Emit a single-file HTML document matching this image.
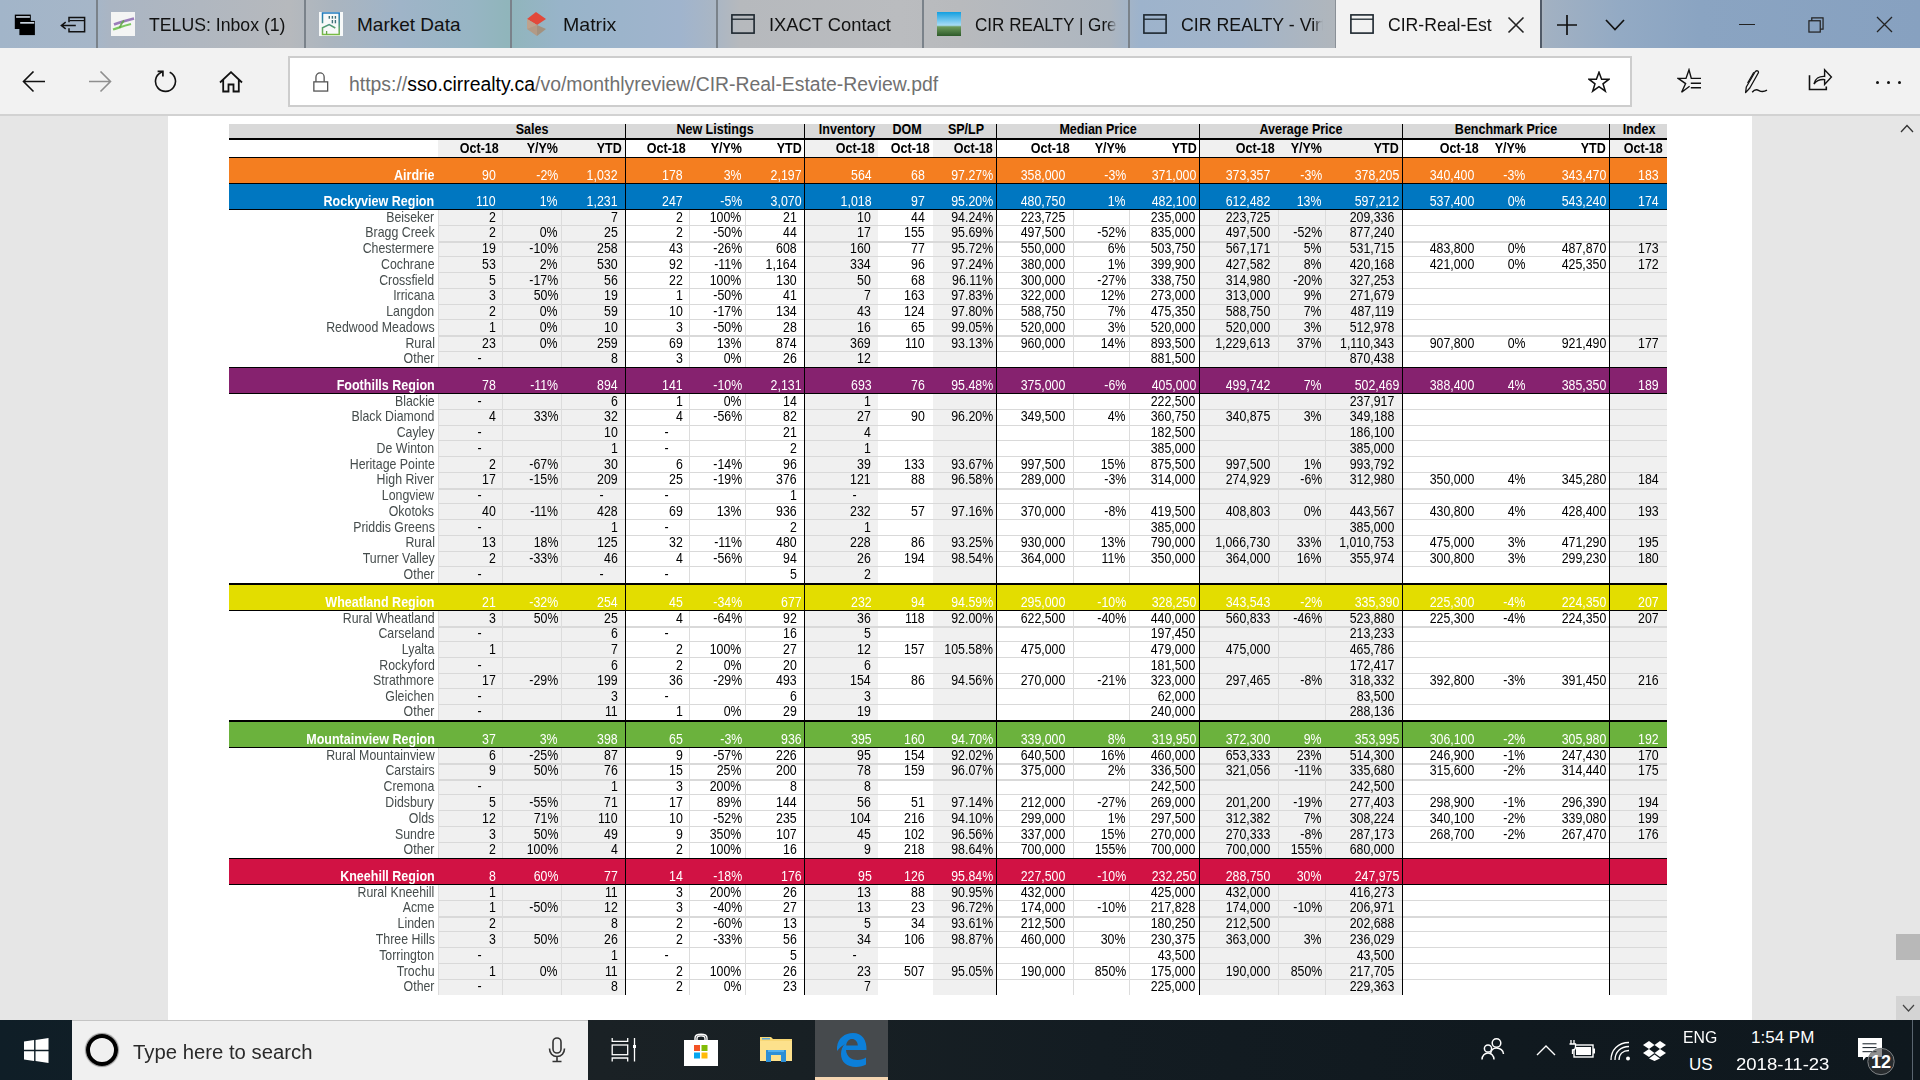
<!DOCTYPE html>
<html><head><meta charset="utf-8"><style>
#tabs{position:absolute;left:0;top:0;width:1920px;height:48px;background:linear-gradient(90deg,#a2b5c9 0px,#a6b6c8 96px,#aab5c3 110px,#b6b9bd 290px,#abb5bf 330px,#9fb4c8 400px,#97b5c4 470px,#90b5bb 508px,#98b4c9 560px,#a0b4cd 680px,#aab6c4 716px,#b6b9bd 740px,#babcbf 900px,#b8babd 960px,#adb6c0 1110px,#9db3cc 1140px,#a2b4c9 1240px,#b0b6bc 1335px,#b0b6bc 1540px,#a2b1c2 1545px,#93aac4 1620px,#8aa4c2 1700px,#87a1c0 1920px)}
.tab{position:absolute;top:0;width:206px;height:48px}
.ticon{position:absolute;left:14px;line-height:0}
.ttl{position:absolute;left:52px;top:0;height:48px;line-height:49px;font-size:19px;color:#111;white-space:nowrap;transform-origin:0 50%}
.clip{position:absolute;left:0;top:0;width:194px;height:48px;overflow:hidden}
.tclose{position:absolute;left:171px;top:16px}
#bar{position:absolute;left:0;top:48px;width:1920px;height:66px;background:#f2f2f2}
#barline{position:absolute;left:0;top:114px;width:1920px;height:2px;background:#d2d2d2}
#addr{position:absolute;left:288px;top:56px;width:1344px;height:51px;border:2px solid #cdcdcd;background:#fff}
#url{position:absolute;left:349px;top:70px;font-size:19.4px;line-height:28px;color:#000;white-space:nowrap}
#url .g{color:#707070}
#content{position:absolute;left:0;top:116px;width:1920px;height:904px;background:#e6e6e6}
#page{position:absolute;left:168px;top:116px;width:1584px;height:904px;background:#fff}
#taskbar{position:absolute;left:0;top:1020px;width:1920px;height:60px;background:linear-gradient(90deg,#0f1e27 0px,#131f26 300px,#1a2125 600px,#182024 800px,#131c22 1100px,#10191f 1500px,#0f181e 1920px)}
#search{position:absolute;left:72px;top:1020px;width:516px;height:60px;background:#f0f0f0;border-top:1px solid #c4c4c4}
#stext{position:absolute;left:133px;top:1038px;font-size:20px;transform:scaleX(1.015);transform-origin:0 0;line-height:28px;color:#2a2a2a;white-space:nowrap}
.tray{position:absolute;font-size:17px;line-height:20px;color:#fff;white-space:nowrap}

*{margin:0;padding:0;box-sizing:border-box}
html,body{width:1920px;height:1080px;overflow:hidden;background:#e6e6e6;font-family:"Liberation Sans",sans-serif}
.r{position:absolute}
.hb,.rb,.rn,.dn,.dv{position:absolute;white-space:nowrap;line-height:0;height:0}
.hb,.rb,.rn,.dn,.dv{transform:scaleX(.87);transform-origin:100% 0}
.hb{font-weight:bold;font-size:14.4px;color:#000}
.rb{font-weight:bold;font-size:14.4px;color:#fff}
.rn{font-size:14.2px;color:#fff}
.dn{font-size:14.2px;color:#454c4c}
.dv{font-size:14.2px;color:#000}
.hb.c{transform:translateX(-50%) scaleX(.87);transform-origin:50% 0}
</style></head><body>
<div id="tabs"></div>
<svg style="position:absolute;left:14px;top:14px" width="22" height="22" viewBox="0 0 22 22"><rect x="0.8" y="0.6" width="16" height="14.4" fill="#000"/><rect x="5.4" y="6.9" width="15.5" height="14.2" fill="#000"/><rect x="2.1" y="2.1" width="13.8" height="1.7" fill="#c9d3de"/><rect x="6.2" y="8" width="14" height="1.7" fill="#c9d3de"/></svg>
<svg style="position:absolute;left:60px;top:16px" width="26" height="17" viewBox="0 0 26 17"><path d="M9 6.2V1.6H24.6V15.8H9V12.2" stroke="#111" stroke-width="1.5" fill="none"/><path d="M9.6 4.6H24" stroke="#111" stroke-width="1.2"/><path d="M1.2 9.5H15.8M5.7 6.2L1.4 9.5L5.7 12.8" stroke="#111" stroke-width="1.5" fill="none"/></svg>
<div class="r" style="left:96px;top:0;width:1.6px;height:48px;background:#7a828a"></div>
<div class="r" style="left:304px;top:0;width:1.6px;height:48px;background:#7a828a"></div>
<div class="r" style="left:510px;top:0;width:1.6px;height:48px;background:#7a828a"></div>
<div class="r" style="left:716px;top:0;width:1.6px;height:48px;background:#7a828a"></div>
<div class="r" style="left:922px;top:0;width:1.6px;height:48px;background:#7a828a"></div>
<div class="r" style="left:1128px;top:0;width:1.6px;height:48px;background:#7a828a"></div>
<div class="r" style="left:1335px;top:0;width:1px;height:48px;background:#8a9097"></div>
<div class="r" style="left:1336px;top:0;width:205px;height:48px;background:#f2f2f2"></div>
<div class="r" style="left:1540px;top:0;width:2px;height:48px;background:#505a68"></div>
<div class="tab" style="left:97px"><div class="ticon" style="top:12px"><svg width="24" height="24" viewBox="0 0 24 24"><rect width="24" height="24" fill="#f4f5f4"/><path d="M3 12.5C8 10.5 14 8.8 23 6.5" stroke="#7d55a8" stroke-width="2.6" fill="none" opacity=".75"/><path d="M2 17.5C7 16 12 14 20 12" stroke="#66c046" stroke-width="2.3" fill="none" opacity=".85"/><path d="M13 8.5C11 10.5 9.5 13 8.5 16" stroke="#5fa545" stroke-width="1.8" fill="none" opacity=".85"/></svg></div><div class="ttl" style="transform:scaleX(0.930)">TELUS: Inbox (1)</div></div>
<div class="tab" style="left:305px"><div class="ticon" style="top:12px"><svg width="24" height="24" viewBox="0 0 24 24"><defs><linearGradient id="mg" x1="0" y1="0" x2="0" y2="1"><stop offset="0" stop-color="#1f7ac0"/><stop offset=".45" stop-color="#3f8a8a"/><stop offset="1" stop-color="#78bb44"/></linearGradient></defs><rect width="24" height="24" fill="#f7f9f9"/><path d="M3.5 11.3V1.1H20.2V22.6H3.5V15.8L10.2 12.6L16.3 16" stroke="url(#mg)" stroke-width="1.5" fill="none"/><path d="M7.6 22.6V19" stroke="#69a84a" stroke-width="1.3"/><g fill="#3d6f78"><rect x="9.6" y="4" width="1.4" height="2.7"/><rect x="12.7" y="4" width="1.4" height="2.7"/><rect x="15.7" y="4" width="1.4" height="2.7"/><rect x="12.7" y="8" width="1.4" height="3.3"/><rect x="15.7" y="8" width="1.4" height="3.3"/></g></svg></div><div class="ttl" style="transform:scaleX(1.000)">Market Data</div></div>
<div class="tab" style="left:511px"><div class="ticon" style="top:12px"><svg width="24" height="24" viewBox="0 0 24 24"><path d="M2 7L11 0L21 7L12 13Z" fill="#e2493a"/><path d="M2 7L12 13L12 24L2 17Z" fill="#b29a86"/><path d="M12 13L21 17L12 24Z" fill="#a3917f"/><path d="M2 7L12 13L2 17Z" fill="#c7a993" opacity=".6"/></svg></div><div class="ttl" style="transform:scaleX(1.030)">Matrix</div></div>
<div class="tab" style="left:717px"><div class="ticon" style="top:14px"><svg width="24" height="20" viewBox="0 0 24 20"><rect x="0.9" y="0.9" width="22.2" height="18.2" fill="none" stroke="#1c262e" stroke-width="1.6"/><line x1="1" y1="5.2" x2="23" y2="5.2" stroke="#1c262e" stroke-width="1.3"/></svg></div><div class="ttl" style="transform:scaleX(0.965)">IXACT Contact</div></div>
<div class="tab" style="left:923px"><div class="ticon" style="top:12px"><svg width="24" height="24" viewBox="0 0 24 24"><defs><linearGradient id="sky" x1="0" y1="0" x2="0" y2="1"><stop offset="0" stop-color="#129fe0"/><stop offset=".55" stop-color="#a8dcf5"/><stop offset=".62" stop-color="#6c9a5a"/><stop offset="1" stop-color="#2e5a2a"/></linearGradient></defs><rect width="24" height="24" fill="url(#sky)"/></svg></div><div class="clip" style="-webkit-mask-image:linear-gradient(90deg,#000 184px,transparent 194px)"><div class="ttl" style="transform:scaleX(0.900)">CIR REALTY | Great</div></div></div>
<div class="tab" style="left:1129px"><div class="ticon" style="top:14px"><svg width="24" height="20" viewBox="0 0 24 20"><rect x="0.9" y="0.9" width="22.2" height="18.2" fill="none" stroke="#1c262e" stroke-width="1.6"/><line x1="1" y1="5.2" x2="23" y2="5.2" stroke="#1c262e" stroke-width="1.3"/></svg></div><div class="clip" style="-webkit-mask-image:linear-gradient(90deg,#000 184px,transparent 194px)"><div class="ttl" style="transform:scaleX(0.934)">CIR REALTY - Virtual</div></div></div>
<div class="tab" style="left:1336px"><div class="ticon" style="top:14px"><svg width="24" height="20" viewBox="0 0 24 20"><rect x="0.9" y="0.9" width="22.2" height="18.2" fill="none" stroke="#1c262e" stroke-width="1.6"/><line x1="1" y1="5.2" x2="23" y2="5.2" stroke="#1c262e" stroke-width="1.3"/></svg></div><div class="ttl" style="transform:scaleX(0.927)">CIR-Real-Est</div><svg class="tclose" width="18" height="18" viewBox="0 0 18 18"><path d="M1.5 1.5L16.5 16.5M16.5 1.5L1.5 16.5" stroke="#222" stroke-width="1.6"/></svg></div>
<svg style="position:absolute;left:1557px;top:15px" width="20" height="20" viewBox="0 0 20 20"><path d="M10 0V20M0 10H20" stroke="#111" stroke-width="1.7"/></svg>
<svg style="position:absolute;left:1605px;top:19px" width="20" height="12" viewBox="0 0 20 12"><path d="M1 1L10 10.5L19 1" stroke="#111" stroke-width="1.7" fill="none"/></svg>
<div class="r" style="left:1739px;top:24px;width:16px;height:1.3px;background:#222"></div>
<svg style="position:absolute;left:1807.5px;top:16.5px" width="16" height="16" viewBox="0 0 17 17"><rect x="1" y="4" width="12" height="12" fill="none" stroke="#222" stroke-width="1.3"/><path d="M4 4V1H16V13H13" fill="none" stroke="#222" stroke-width="1.3"/></svg>
<svg style="position:absolute;left:1876px;top:16px" width="17" height="17" viewBox="0 0 17 17"><path d="M1 1L16 16M16 1L1 16" stroke="#222" stroke-width="1.3"/></svg>
<div id="bar"></div><div id="barline"></div>
<svg style="position:absolute;left:22px;top:71px" width="24" height="22" viewBox="0 0 24 22"><path d="M23 10.5H1.5M11.5 0.5L1.5 10.5L11.5 20.5" stroke="#111" stroke-width="1.6" fill="none"/></svg>
<svg style="position:absolute;left:88px;top:71px" width="24" height="22" viewBox="0 0 24 22"><path d="M1 10.5H22.5M12.5 0.5L22.5 10.5L12.5 20.5" stroke="#8f8f8f" stroke-width="1.6" fill="none"/></svg>
<svg style="position:absolute;left:154px;top:70px" width="23" height="23" viewBox="0 0 23 23"><path d="M15.7 2.34A10 10 0 1 1 6.8 2.57L8.6 1.5" stroke="#111" stroke-width="1.6" fill="none"/><path d="M3.6 1.3H8.9V6.4" stroke="#111" stroke-width="1.7" fill="none"/></svg>
<svg style="position:absolute;left:219px;top:71px" width="24" height="22" viewBox="0 0 24 22"><path d="M1 11.5L12 1.2L23 11.5M4.2 9V20.5H9.5V13.5H14.5V20.5H19.8V9" stroke="#111" stroke-width="1.8" fill="none"/></svg>
<div id="addr"></div>
<svg style="position:absolute;left:312px;top:72px" width="17" height="21" viewBox="0 0 17 21"><path d="M3.95 9.85V5A4.1 4.1 0 0 1 12.15 5V9.85" stroke="#555" stroke-width="1.3" fill="none"/><rect x="1.85" y="9.85" width="13.8" height="9.2" fill="none" stroke="#555" stroke-width="1.3"/></svg>
<div id="url"><span class="g">https://</span>sso.cirrealty.ca<span class="g">/vo/monthlyreview/CIR-Real-Estate-Review.pdf</span></div>
<svg style="position:absolute;left:1588px;top:71px" width="22" height="22" viewBox="0 0 22 22"><path d="M11 1.2L13.6 8.2H21L15 12.8L17.3 20.2L11 15.6L4.7 20.2L7 12.8L1 8.2H8.4Z" stroke="#111" stroke-width="1.5" fill="none" stroke-linejoin="miter"/></svg>
<svg style="position:absolute;left:1677px;top:68px" width="26" height="26" viewBox="0 0 26 26"><path d="M24 10.4H14.3L12 1.8L9 10.4H1.2L8.6 15.6L4.6 24.2L12.6 18.3" stroke="#111" stroke-width="1.4" fill="none" stroke-linejoin="miter"/><path d="M13.8 15.3H24M13.8 19.7H24" stroke="#111" stroke-width="1.5"/></svg>
<svg style="position:absolute;left:1744px;top:68px" width="26" height="26" viewBox="0 0 26 26"><path d="M1.6 24.6L2.3 19L11 4C12.2 2 15 2.6 14.4 4.8L5.8 20Z" stroke="#111" stroke-width="1.3" fill="none" stroke-linejoin="round"/><path d="M9.8 4.2L3.6 15" stroke="#111" stroke-width="1.2"/><path d="M8.2 24.2C10.3 21.6 12.5 21.2 15 22.6C17.5 24 19.8 24 23 22.2" stroke="#111" stroke-width="1.4" fill="none"/></svg>
<svg style="position:absolute;left:1808px;top:68px" width="26" height="24" viewBox="0 0 26 24"><path d="M1.5 7.3V21.5H18.3V18.6" stroke="#111" stroke-width="1.6" fill="none"/><path d="M6 16C7 10.8 11.2 8 16.6 8.4V1.8L23.4 9L16.6 16.4V11.6C12 11.2 8.3 12.8 6 16Z" stroke="#111" stroke-width="1.4" fill="none" stroke-linejoin="miter"/></svg>
<div class="r" style="left:1876.0px;top:80.5px;width:3px;height:3px;background:#111;border-radius:1.5px"></div>
<div class="r" style="left:1887.0px;top:80.5px;width:3px;height:3px;background:#111;border-radius:1.5px"></div>
<div class="r" style="left:1898.0px;top:80.5px;width:3px;height:3px;background:#111;border-radius:1.5px"></div>
<div id="content"></div><div id="page"></div>
<svg style="position:absolute;left:1900px;top:124px" width="14" height="9" viewBox="0 0 14 9"><path d="M1 8L7 1.5L13 8" stroke="#333" stroke-width="1.3" fill="none"/></svg>
<div class="r" style="left:1896px;top:934px;width:24px;height:26px;background:#b8b8b8"></div>
<div class="r" style="left:1896px;top:996px;width:24px;height:24px;background:#d4d4d4"></div>
<svg style="position:absolute;left:1902px;top:1004px" width="13" height="8" viewBox="0 0 13 8"><path d="M1 1L6.5 7L12 1" stroke="#444" stroke-width="1.2" fill="none"/></svg>
<div class="r" style="left:229.00px;top:124.00px;width:1438.00px;height:14.00px;background:#d9d9d9;"></div>
<div class="r" style="left:229.00px;top:138.00px;width:1438.00px;height:2.00px;background:#000;"></div>
<div class="r" style="left:438.00px;top:140.00px;width:187.00px;height:17.00px;background:#f0f0f0;"></div>
<div class="r" style="left:805.00px;top:140.00px;width:73.00px;height:17.00px;background:#f0f0f0;"></div>
<div class="r" style="left:933.00px;top:140.00px;width:63.50px;height:17.00px;background:#f0f0f0;"></div>
<div class="r" style="left:1200.00px;top:140.00px;width:202.30px;height:17.00px;background:#f0f0f0;"></div>
<div class="r" style="left:1610.00px;top:140.00px;width:57.00px;height:17.00px;background:#f0f0f0;"></div>
<div class="r" style="left:229.00px;top:157.00px;width:1438.00px;height:1.00px;background:#000;"></div>
<div class="r" style="left:229.00px;top:158.00px;width:1438.00px;height:25.00px;background:#f47e20;"></div>
<div class="r" style="left:229.00px;top:183.00px;width:1438.00px;height:1.00px;background:#000;"></div>
<div class="r" style="left:229.00px;top:183.00px;width:1438.00px;height:1.00px;background:#000;"></div>
<div class="r" style="left:229.00px;top:184.00px;width:1438.00px;height:25.00px;background:#0077c1;"></div>
<div class="r" style="left:229.00px;top:209.00px;width:1438.00px;height:1.00px;background:#000;"></div>
<div class="r" style="left:438.00px;top:210.00px;width:187.00px;height:157.00px;background:#f0f0f0;"></div>
<div class="r" style="left:805.00px;top:210.00px;width:73.00px;height:157.00px;background:#f0f0f0;"></div>
<div class="r" style="left:933.00px;top:210.00px;width:63.50px;height:157.00px;background:#f0f0f0;"></div>
<div class="r" style="left:1200.00px;top:210.00px;width:202.30px;height:157.00px;background:#f0f0f0;"></div>
<div class="r" style="left:1610.00px;top:210.00px;width:57.00px;height:157.00px;background:#f0f0f0;"></div>
<div class="r" style="left:438.00px;top:224.75px;width:1229.00px;height:1.00px;background:#d9d9d9;"></div>
<div class="r" style="left:438.00px;top:240.50px;width:1229.00px;height:2.00px;background:#d9d9d9;"></div>
<div class="r" style="left:438.00px;top:256.25px;width:1229.00px;height:1.00px;background:#d9d9d9;"></div>
<div class="r" style="left:438.00px;top:272.00px;width:1229.00px;height:1.00px;background:#d9d9d9;"></div>
<div class="r" style="left:438.00px;top:287.75px;width:1229.00px;height:1.00px;background:#d9d9d9;"></div>
<div class="r" style="left:438.00px;top:303.50px;width:1229.00px;height:1.00px;background:#d9d9d9;"></div>
<div class="r" style="left:438.00px;top:319.25px;width:1229.00px;height:1.00px;background:#d9d9d9;"></div>
<div class="r" style="left:438.00px;top:335.00px;width:1229.00px;height:2.00px;background:#d9d9d9;"></div>
<div class="r" style="left:438.00px;top:350.75px;width:1229.00px;height:1.00px;background:#d9d9d9;"></div>
<div class="r" style="left:437.50px;top:210.00px;width:1.00px;height:157.00px;background:#dcdcdc;"></div>
<div class="r" style="left:501.50px;top:210.00px;width:1.00px;height:157.00px;background:#dcdcdc;"></div>
<div class="r" style="left:560.50px;top:210.00px;width:1.00px;height:157.00px;background:#dcdcdc;"></div>
<div class="r" style="left:688.50px;top:210.00px;width:1.00px;height:157.00px;background:#dcdcdc;"></div>
<div class="r" style="left:745.00px;top:210.00px;width:1.00px;height:157.00px;background:#dcdcdc;"></div>
<div class="r" style="left:1072.90px;top:210.00px;width:1.00px;height:157.00px;background:#dcdcdc;"></div>
<div class="r" style="left:1129.10px;top:210.00px;width:1.00px;height:157.00px;background:#dcdcdc;"></div>
<div class="r" style="left:1277.70px;top:210.00px;width:1.00px;height:157.00px;background:#dcdcdc;"></div>
<div class="r" style="left:1324.70px;top:210.00px;width:1.00px;height:157.00px;background:#dcdcdc;"></div>
<div class="r" style="left:229.00px;top:367.00px;width:1438.00px;height:1.00px;background:#000;"></div>
<div class="r" style="left:229.00px;top:368.00px;width:1438.00px;height:25.00px;background:#86226f;"></div>
<div class="r" style="left:229.00px;top:393.00px;width:1438.00px;height:1.00px;background:#000;"></div>
<div class="r" style="left:438.00px;top:394.00px;width:187.00px;height:188.70px;background:#f0f0f0;"></div>
<div class="r" style="left:805.00px;top:394.00px;width:73.00px;height:188.70px;background:#f0f0f0;"></div>
<div class="r" style="left:933.00px;top:394.00px;width:63.50px;height:188.70px;background:#f0f0f0;"></div>
<div class="r" style="left:1200.00px;top:394.00px;width:202.30px;height:188.70px;background:#f0f0f0;"></div>
<div class="r" style="left:1610.00px;top:394.00px;width:57.00px;height:188.70px;background:#f0f0f0;"></div>
<div class="r" style="left:438.00px;top:408.77px;width:1229.00px;height:1.00px;background:#d9d9d9;"></div>
<div class="r" style="left:438.00px;top:424.53px;width:1229.00px;height:1.00px;background:#d9d9d9;"></div>
<div class="r" style="left:438.00px;top:440.30px;width:1229.00px;height:1.00px;background:#d9d9d9;"></div>
<div class="r" style="left:438.00px;top:456.07px;width:1229.00px;height:1.00px;background:#d9d9d9;"></div>
<div class="r" style="left:438.00px;top:471.83px;width:1229.00px;height:1.00px;background:#d9d9d9;"></div>
<div class="r" style="left:438.00px;top:487.60px;width:1229.00px;height:2.00px;background:#d9d9d9;"></div>
<div class="r" style="left:438.00px;top:503.37px;width:1229.00px;height:1.00px;background:#d9d9d9;"></div>
<div class="r" style="left:438.00px;top:519.13px;width:1229.00px;height:1.00px;background:#d9d9d9;"></div>
<div class="r" style="left:438.00px;top:534.90px;width:1229.00px;height:1.00px;background:#d9d9d9;"></div>
<div class="r" style="left:438.00px;top:550.67px;width:1229.00px;height:1.00px;background:#d9d9d9;"></div>
<div class="r" style="left:438.00px;top:566.43px;width:1229.00px;height:1.00px;background:#d9d9d9;"></div>
<div class="r" style="left:437.50px;top:394.00px;width:1.00px;height:188.70px;background:#dcdcdc;"></div>
<div class="r" style="left:501.50px;top:394.00px;width:1.00px;height:188.70px;background:#dcdcdc;"></div>
<div class="r" style="left:560.50px;top:394.00px;width:1.00px;height:188.70px;background:#dcdcdc;"></div>
<div class="r" style="left:688.50px;top:394.00px;width:1.00px;height:188.70px;background:#dcdcdc;"></div>
<div class="r" style="left:745.00px;top:394.00px;width:1.00px;height:188.70px;background:#dcdcdc;"></div>
<div class="r" style="left:1072.90px;top:394.00px;width:1.00px;height:188.70px;background:#dcdcdc;"></div>
<div class="r" style="left:1129.10px;top:394.00px;width:1.00px;height:188.70px;background:#dcdcdc;"></div>
<div class="r" style="left:1277.70px;top:394.00px;width:1.00px;height:188.70px;background:#dcdcdc;"></div>
<div class="r" style="left:1324.70px;top:394.00px;width:1.00px;height:188.70px;background:#dcdcdc;"></div>
<div class="r" style="left:229.00px;top:582.70px;width:1438.00px;height:2.30px;background:#000;"></div>
<div class="r" style="left:229.00px;top:585.00px;width:1438.00px;height:25.00px;background:#e3dd00;"></div>
<div class="r" style="left:229.00px;top:610.00px;width:1438.00px;height:1.00px;background:#000;"></div>
<div class="r" style="left:438.00px;top:611.00px;width:187.00px;height:109.00px;background:#f0f0f0;"></div>
<div class="r" style="left:805.00px;top:611.00px;width:73.00px;height:109.00px;background:#f0f0f0;"></div>
<div class="r" style="left:933.00px;top:611.00px;width:63.50px;height:109.00px;background:#f0f0f0;"></div>
<div class="r" style="left:1200.00px;top:611.00px;width:202.30px;height:109.00px;background:#f0f0f0;"></div>
<div class="r" style="left:1610.00px;top:611.00px;width:57.00px;height:109.00px;background:#f0f0f0;"></div>
<div class="r" style="left:438.00px;top:625.64px;width:1229.00px;height:2.00px;background:#d9d9d9;"></div>
<div class="r" style="left:438.00px;top:641.29px;width:1229.00px;height:1.00px;background:#d9d9d9;"></div>
<div class="r" style="left:438.00px;top:656.93px;width:1229.00px;height:1.00px;background:#d9d9d9;"></div>
<div class="r" style="left:438.00px;top:672.57px;width:1229.00px;height:1.00px;background:#d9d9d9;"></div>
<div class="r" style="left:438.00px;top:688.21px;width:1229.00px;height:1.00px;background:#d9d9d9;"></div>
<div class="r" style="left:438.00px;top:703.86px;width:1229.00px;height:1.00px;background:#d9d9d9;"></div>
<div class="r" style="left:437.50px;top:611.00px;width:1.00px;height:109.00px;background:#dcdcdc;"></div>
<div class="r" style="left:501.50px;top:611.00px;width:1.00px;height:109.00px;background:#dcdcdc;"></div>
<div class="r" style="left:560.50px;top:611.00px;width:1.00px;height:109.00px;background:#dcdcdc;"></div>
<div class="r" style="left:688.50px;top:611.00px;width:1.00px;height:109.00px;background:#dcdcdc;"></div>
<div class="r" style="left:745.00px;top:611.00px;width:1.00px;height:109.00px;background:#dcdcdc;"></div>
<div class="r" style="left:1072.90px;top:611.00px;width:1.00px;height:109.00px;background:#dcdcdc;"></div>
<div class="r" style="left:1129.10px;top:611.00px;width:1.00px;height:109.00px;background:#dcdcdc;"></div>
<div class="r" style="left:1277.70px;top:611.00px;width:1.00px;height:109.00px;background:#dcdcdc;"></div>
<div class="r" style="left:1324.70px;top:611.00px;width:1.00px;height:109.00px;background:#dcdcdc;"></div>
<div class="r" style="left:229.00px;top:720.00px;width:1438.00px;height:2.00px;background:#000;"></div>
<div class="r" style="left:229.00px;top:722.00px;width:1438.00px;height:25.00px;background:#6bb23d;"></div>
<div class="r" style="left:229.00px;top:747.00px;width:1438.00px;height:1.00px;background:#000;"></div>
<div class="r" style="left:438.00px;top:748.00px;width:187.00px;height:110.00px;background:#f0f0f0;"></div>
<div class="r" style="left:805.00px;top:748.00px;width:73.00px;height:110.00px;background:#f0f0f0;"></div>
<div class="r" style="left:933.00px;top:748.00px;width:63.50px;height:110.00px;background:#f0f0f0;"></div>
<div class="r" style="left:1200.00px;top:748.00px;width:202.30px;height:110.00px;background:#f0f0f0;"></div>
<div class="r" style="left:1610.00px;top:748.00px;width:57.00px;height:110.00px;background:#f0f0f0;"></div>
<div class="r" style="left:438.00px;top:762.79px;width:1229.00px;height:2.00px;background:#d9d9d9;"></div>
<div class="r" style="left:438.00px;top:778.57px;width:1229.00px;height:2.00px;background:#d9d9d9;"></div>
<div class="r" style="left:438.00px;top:794.36px;width:1229.00px;height:1.00px;background:#d9d9d9;"></div>
<div class="r" style="left:438.00px;top:810.14px;width:1229.00px;height:1.00px;background:#d9d9d9;"></div>
<div class="r" style="left:438.00px;top:825.93px;width:1229.00px;height:1.00px;background:#d9d9d9;"></div>
<div class="r" style="left:438.00px;top:841.71px;width:1229.00px;height:1.00px;background:#d9d9d9;"></div>
<div class="r" style="left:437.50px;top:748.00px;width:1.00px;height:110.00px;background:#dcdcdc;"></div>
<div class="r" style="left:501.50px;top:748.00px;width:1.00px;height:110.00px;background:#dcdcdc;"></div>
<div class="r" style="left:560.50px;top:748.00px;width:1.00px;height:110.00px;background:#dcdcdc;"></div>
<div class="r" style="left:688.50px;top:748.00px;width:1.00px;height:110.00px;background:#dcdcdc;"></div>
<div class="r" style="left:745.00px;top:748.00px;width:1.00px;height:110.00px;background:#dcdcdc;"></div>
<div class="r" style="left:1072.90px;top:748.00px;width:1.00px;height:110.00px;background:#dcdcdc;"></div>
<div class="r" style="left:1129.10px;top:748.00px;width:1.00px;height:110.00px;background:#dcdcdc;"></div>
<div class="r" style="left:1277.70px;top:748.00px;width:1.00px;height:110.00px;background:#dcdcdc;"></div>
<div class="r" style="left:1324.70px;top:748.00px;width:1.00px;height:110.00px;background:#dcdcdc;"></div>
<div class="r" style="left:229.00px;top:858.00px;width:1438.00px;height:1.00px;background:#000;"></div>
<div class="r" style="left:229.00px;top:859.00px;width:1438.00px;height:25.00px;background:#d11244;"></div>
<div class="r" style="left:229.00px;top:884.00px;width:1438.00px;height:1.00px;background:#000;"></div>
<div class="r" style="left:438.00px;top:885.00px;width:187.00px;height:110.00px;background:#f0f0f0;"></div>
<div class="r" style="left:805.00px;top:885.00px;width:73.00px;height:110.00px;background:#f0f0f0;"></div>
<div class="r" style="left:933.00px;top:885.00px;width:63.50px;height:110.00px;background:#f0f0f0;"></div>
<div class="r" style="left:1200.00px;top:885.00px;width:202.30px;height:110.00px;background:#f0f0f0;"></div>
<div class="r" style="left:1610.00px;top:885.00px;width:57.00px;height:110.00px;background:#f0f0f0;"></div>
<div class="r" style="left:438.00px;top:899.79px;width:1229.00px;height:1.00px;background:#d9d9d9;"></div>
<div class="r" style="left:438.00px;top:915.57px;width:1229.00px;height:2.00px;background:#d9d9d9;"></div>
<div class="r" style="left:438.00px;top:931.36px;width:1229.00px;height:1.00px;background:#d9d9d9;"></div>
<div class="r" style="left:438.00px;top:947.14px;width:1229.00px;height:1.00px;background:#d9d9d9;"></div>
<div class="r" style="left:438.00px;top:962.93px;width:1229.00px;height:1.00px;background:#d9d9d9;"></div>
<div class="r" style="left:438.00px;top:978.71px;width:1229.00px;height:1.00px;background:#d9d9d9;"></div>
<div class="r" style="left:437.50px;top:885.00px;width:1.00px;height:110.00px;background:#dcdcdc;"></div>
<div class="r" style="left:501.50px;top:885.00px;width:1.00px;height:110.00px;background:#dcdcdc;"></div>
<div class="r" style="left:560.50px;top:885.00px;width:1.00px;height:110.00px;background:#dcdcdc;"></div>
<div class="r" style="left:688.50px;top:885.00px;width:1.00px;height:110.00px;background:#dcdcdc;"></div>
<div class="r" style="left:745.00px;top:885.00px;width:1.00px;height:110.00px;background:#dcdcdc;"></div>
<div class="r" style="left:1072.90px;top:885.00px;width:1.00px;height:110.00px;background:#dcdcdc;"></div>
<div class="r" style="left:1129.10px;top:885.00px;width:1.00px;height:110.00px;background:#dcdcdc;"></div>
<div class="r" style="left:1277.70px;top:885.00px;width:1.00px;height:110.00px;background:#dcdcdc;"></div>
<div class="r" style="left:1324.70px;top:885.00px;width:1.00px;height:110.00px;background:#dcdcdc;"></div>
<div class="r" style="left:624.50px;top:124.00px;width:1.30px;height:871.00px;background:#000;"></div>
<div class="r" style="left:804.00px;top:124.00px;width:1.30px;height:871.00px;background:#000;"></div>
<div class="r" style="left:996.00px;top:124.00px;width:1.30px;height:871.00px;background:#000;"></div>
<div class="r" style="left:1199.00px;top:124.00px;width:1.30px;height:871.00px;background:#000;"></div>
<div class="r" style="left:1401.80px;top:124.00px;width:1.30px;height:871.00px;background:#000;"></div>
<div class="r" style="left:1609.00px;top:124.00px;width:1.30px;height:871.00px;background:#000;"></div>
<span class="hb c" style="left:532.00px;top:129.31px">Sales</span>
<span class="hb c" style="left:715.00px;top:129.31px">New Listings</span>
<span class="hb c" style="left:847.00px;top:129.31px">Inventory</span>
<span class="hb c" style="left:906.50px;top:129.31px">DOM</span>
<span class="hb c" style="left:965.50px;top:129.31px">SP/LP</span>
<span class="hb c" style="left:1098.00px;top:129.31px">Median Price</span>
<span class="hb c" style="left:1301.00px;top:129.31px">Average Price</span>
<span class="hb c" style="left:1506.00px;top:129.31px">Benchmark Price</span>
<span class="hb c" style="left:1639.00px;top:129.31px">Index</span>
<span class="hb" style="right:1421.00px;top:147.81px">Oct-18</span>
<span class="hb" style="right:1362.50px;top:147.81px">Y/Y%</span>
<span class="hb" style="right:1298.00px;top:147.81px">YTD</span>
<span class="hb" style="right:1234.00px;top:147.81px">Oct-18</span>
<span class="hb" style="right:1178.30px;top:147.81px">Y/Y%</span>
<span class="hb" style="right:1118.40px;top:147.81px">YTD</span>
<span class="hb" style="right:1045.00px;top:147.81px">Oct-18</span>
<span class="hb" style="right:990.50px;top:147.81px">Oct-18</span>
<span class="hb" style="right:927.00px;top:147.81px">Oct-18</span>
<span class="hb" style="right:850.00px;top:147.81px">Oct-18</span>
<span class="hb" style="right:794.20px;top:147.81px">Y/Y%</span>
<span class="hb" style="right:723.70px;top:147.81px">YTD</span>
<span class="hb" style="right:645.20px;top:147.81px">Oct-18</span>
<span class="hb" style="right:598.20px;top:147.81px">Y/Y%</span>
<span class="hb" style="right:521.00px;top:147.81px">YTD</span>
<span class="hb" style="right:440.80px;top:147.81px">Oct-18</span>
<span class="hb" style="right:394.40px;top:147.81px">Y/Y%</span>
<span class="hb" style="right:314.20px;top:147.81px">YTD</span>
<span class="hb" style="right:257.00px;top:147.81px">Oct-18</span>
<span class="rb" style="right:1485.60px;top:175.21px">Airdrie</span>
<span class="rn" style="right:1424.50px;top:175.28px">90</span>
<span class="rn" style="right:1362.00px;top:175.28px">-2%</span>
<span class="rn" style="right:1302.00px;top:175.28px">1,032</span>
<span class="rn" style="right:1237.00px;top:175.28px">178</span>
<span class="rn" style="right:1178.00px;top:175.28px">3%</span>
<span class="rn" style="right:1118.40px;top:175.28px">2,197</span>
<span class="rn" style="right:1048.40px;top:175.28px">564</span>
<span class="rn" style="right:995.00px;top:175.28px">68</span>
<span class="rn" style="right:927.00px;top:175.28px">97.27%</span>
<span class="rn" style="right:854.40px;top:175.28px">358,000</span>
<span class="rn" style="right:794.20px;top:175.28px">-3%</span>
<span class="rn" style="right:723.70px;top:175.28px">371,000</span>
<span class="rn" style="right:649.80px;top:175.28px">373,357</span>
<span class="rn" style="right:598.20px;top:175.28px">-3%</span>
<span class="rn" style="right:521.00px;top:175.28px">378,205</span>
<span class="rn" style="right:446.00px;top:175.28px">340,400</span>
<span class="rn" style="right:394.40px;top:175.28px">-3%</span>
<span class="rn" style="right:314.20px;top:175.28px">343,470</span>
<span class="rn" style="right:261.00px;top:175.28px">183</span>
<span class="rb" style="right:1485.60px;top:201.21px">Rockyview Region</span>
<span class="rn" style="right:1424.50px;top:201.28px">110</span>
<span class="rn" style="right:1362.00px;top:201.28px">1%</span>
<span class="rn" style="right:1302.00px;top:201.28px">1,231</span>
<span class="rn" style="right:1237.00px;top:201.28px">247</span>
<span class="rn" style="right:1178.00px;top:201.28px">-5%</span>
<span class="rn" style="right:1118.40px;top:201.28px">3,070</span>
<span class="rn" style="right:1048.40px;top:201.28px">1,018</span>
<span class="rn" style="right:995.00px;top:201.28px">97</span>
<span class="rn" style="right:927.00px;top:201.28px">95.20%</span>
<span class="rn" style="right:854.40px;top:201.28px">480,750</span>
<span class="rn" style="right:794.20px;top:201.28px">1%</span>
<span class="rn" style="right:723.70px;top:201.28px">482,100</span>
<span class="rn" style="right:649.80px;top:201.28px">612,482</span>
<span class="rn" style="right:598.20px;top:201.28px">13%</span>
<span class="rn" style="right:521.00px;top:201.28px">597,212</span>
<span class="rn" style="right:446.00px;top:201.28px">537,400</span>
<span class="rn" style="right:394.40px;top:201.28px">0%</span>
<span class="rn" style="right:314.20px;top:201.28px">543,240</span>
<span class="rn" style="right:261.00px;top:201.28px">174</span>
<span class="dn" style="right:1485.60px;top:216.58px">Beiseker</span>
<span class="dv" style="right:1424.50px;top:216.58px">2</span>
<span class="dv" style="right:1302.50px;top:216.58px">7</span>
<span class="dv" style="right:1237.50px;top:216.58px">2</span>
<span class="dv" style="right:1178.30px;top:216.58px">100%</span>
<span class="dv" style="right:1123.50px;top:216.58px">21</span>
<span class="dv" style="right:1049.50px;top:216.58px">10</span>
<span class="dv" style="right:995.30px;top:216.58px">44</span>
<span class="dv" style="right:927.00px;top:216.58px">94.24%</span>
<span class="dv" style="right:854.40px;top:216.58px">223,725</span>
<span class="dv" style="right:724.30px;top:216.58px">235,000</span>
<span class="dv" style="right:649.80px;top:216.58px">223,725</span>
<span class="dv" style="right:526.00px;top:216.58px">209,336</span>
<span class="dn" style="right:1485.60px;top:232.33px">Bragg Creek</span>
<span class="dv" style="right:1424.50px;top:232.33px">2</span>
<span class="dv" style="right:1362.00px;top:232.33px">0%</span>
<span class="dv" style="right:1302.50px;top:232.33px">25</span>
<span class="dv" style="right:1237.50px;top:232.33px">2</span>
<span class="dv" style="right:1178.30px;top:232.33px">-50%</span>
<span class="dv" style="right:1123.50px;top:232.33px">44</span>
<span class="dv" style="right:1049.50px;top:232.33px">17</span>
<span class="dv" style="right:995.30px;top:232.33px">155</span>
<span class="dv" style="right:927.00px;top:232.33px">95.69%</span>
<span class="dv" style="right:854.40px;top:232.33px">497,500</span>
<span class="dv" style="right:794.20px;top:232.33px">-52%</span>
<span class="dv" style="right:724.30px;top:232.33px">835,000</span>
<span class="dv" style="right:649.80px;top:232.33px">497,500</span>
<span class="dv" style="right:598.20px;top:232.33px">-52%</span>
<span class="dv" style="right:526.00px;top:232.33px">877,240</span>
<span class="dn" style="right:1485.60px;top:248.08px">Chestermere</span>
<span class="dv" style="right:1424.50px;top:248.08px">19</span>
<span class="dv" style="right:1362.00px;top:248.08px">-10%</span>
<span class="dv" style="right:1302.50px;top:248.08px">258</span>
<span class="dv" style="right:1237.50px;top:248.08px">43</span>
<span class="dv" style="right:1178.30px;top:248.08px">-26%</span>
<span class="dv" style="right:1123.50px;top:248.08px">608</span>
<span class="dv" style="right:1049.50px;top:248.08px">160</span>
<span class="dv" style="right:995.30px;top:248.08px">77</span>
<span class="dv" style="right:927.00px;top:248.08px">95.72%</span>
<span class="dv" style="right:854.40px;top:248.08px">550,000</span>
<span class="dv" style="right:794.20px;top:248.08px">6%</span>
<span class="dv" style="right:724.30px;top:248.08px">503,750</span>
<span class="dv" style="right:649.80px;top:248.08px">567,171</span>
<span class="dv" style="right:598.20px;top:248.08px">5%</span>
<span class="dv" style="right:526.00px;top:248.08px">531,715</span>
<span class="dv" style="right:446.00px;top:248.08px">483,800</span>
<span class="dv" style="right:394.40px;top:248.08px">0%</span>
<span class="dv" style="right:314.20px;top:248.08px">487,870</span>
<span class="dv" style="right:261.00px;top:248.08px">173</span>
<span class="dn" style="right:1485.60px;top:263.83px">Cochrane</span>
<span class="dv" style="right:1424.50px;top:263.83px">53</span>
<span class="dv" style="right:1362.00px;top:263.83px">2%</span>
<span class="dv" style="right:1302.50px;top:263.83px">530</span>
<span class="dv" style="right:1237.50px;top:263.83px">92</span>
<span class="dv" style="right:1178.30px;top:263.83px">-11%</span>
<span class="dv" style="right:1123.50px;top:263.83px">1,164</span>
<span class="dv" style="right:1049.50px;top:263.83px">334</span>
<span class="dv" style="right:995.30px;top:263.83px">96</span>
<span class="dv" style="right:927.00px;top:263.83px">97.24%</span>
<span class="dv" style="right:854.40px;top:263.83px">380,000</span>
<span class="dv" style="right:794.20px;top:263.83px">1%</span>
<span class="dv" style="right:724.30px;top:263.83px">399,900</span>
<span class="dv" style="right:649.80px;top:263.83px">427,582</span>
<span class="dv" style="right:598.20px;top:263.83px">8%</span>
<span class="dv" style="right:526.00px;top:263.83px">420,168</span>
<span class="dv" style="right:446.00px;top:263.83px">421,000</span>
<span class="dv" style="right:394.40px;top:263.83px">0%</span>
<span class="dv" style="right:314.20px;top:263.83px">425,350</span>
<span class="dv" style="right:261.00px;top:263.83px">172</span>
<span class="dn" style="right:1485.60px;top:279.58px">Crossfield</span>
<span class="dv" style="right:1424.50px;top:279.58px">5</span>
<span class="dv" style="right:1362.00px;top:279.58px">-17%</span>
<span class="dv" style="right:1302.50px;top:279.58px">56</span>
<span class="dv" style="right:1237.50px;top:279.58px">22</span>
<span class="dv" style="right:1178.30px;top:279.58px">100%</span>
<span class="dv" style="right:1123.50px;top:279.58px">130</span>
<span class="dv" style="right:1049.50px;top:279.58px">50</span>
<span class="dv" style="right:995.30px;top:279.58px">68</span>
<span class="dv" style="right:927.00px;top:279.58px">96.11%</span>
<span class="dv" style="right:854.40px;top:279.58px">300,000</span>
<span class="dv" style="right:794.20px;top:279.58px">-27%</span>
<span class="dv" style="right:724.30px;top:279.58px">338,750</span>
<span class="dv" style="right:649.80px;top:279.58px">314,980</span>
<span class="dv" style="right:598.20px;top:279.58px">-20%</span>
<span class="dv" style="right:526.00px;top:279.58px">327,253</span>
<span class="dn" style="right:1485.60px;top:295.33px">Irricana</span>
<span class="dv" style="right:1424.50px;top:295.33px">3</span>
<span class="dv" style="right:1362.00px;top:295.33px">50%</span>
<span class="dv" style="right:1302.50px;top:295.33px">19</span>
<span class="dv" style="right:1237.50px;top:295.33px">1</span>
<span class="dv" style="right:1178.30px;top:295.33px">-50%</span>
<span class="dv" style="right:1123.50px;top:295.33px">41</span>
<span class="dv" style="right:1049.50px;top:295.33px">7</span>
<span class="dv" style="right:995.30px;top:295.33px">163</span>
<span class="dv" style="right:927.00px;top:295.33px">97.83%</span>
<span class="dv" style="right:854.40px;top:295.33px">322,000</span>
<span class="dv" style="right:794.20px;top:295.33px">12%</span>
<span class="dv" style="right:724.30px;top:295.33px">273,000</span>
<span class="dv" style="right:649.80px;top:295.33px">313,000</span>
<span class="dv" style="right:598.20px;top:295.33px">9%</span>
<span class="dv" style="right:526.00px;top:295.33px">271,679</span>
<span class="dn" style="right:1485.60px;top:311.08px">Langdon</span>
<span class="dv" style="right:1424.50px;top:311.08px">2</span>
<span class="dv" style="right:1362.00px;top:311.08px">0%</span>
<span class="dv" style="right:1302.50px;top:311.08px">59</span>
<span class="dv" style="right:1237.50px;top:311.08px">10</span>
<span class="dv" style="right:1178.30px;top:311.08px">-17%</span>
<span class="dv" style="right:1123.50px;top:311.08px">134</span>
<span class="dv" style="right:1049.50px;top:311.08px">43</span>
<span class="dv" style="right:995.30px;top:311.08px">124</span>
<span class="dv" style="right:927.00px;top:311.08px">97.80%</span>
<span class="dv" style="right:854.40px;top:311.08px">588,750</span>
<span class="dv" style="right:794.20px;top:311.08px">7%</span>
<span class="dv" style="right:724.30px;top:311.08px">475,350</span>
<span class="dv" style="right:649.80px;top:311.08px">588,750</span>
<span class="dv" style="right:598.20px;top:311.08px">7%</span>
<span class="dv" style="right:526.00px;top:311.08px">487,119</span>
<span class="dn" style="right:1485.60px;top:326.83px">Redwood Meadows</span>
<span class="dv" style="right:1424.50px;top:326.83px">1</span>
<span class="dv" style="right:1362.00px;top:326.83px">0%</span>
<span class="dv" style="right:1302.50px;top:326.83px">10</span>
<span class="dv" style="right:1237.50px;top:326.83px">3</span>
<span class="dv" style="right:1178.30px;top:326.83px">-50%</span>
<span class="dv" style="right:1123.50px;top:326.83px">28</span>
<span class="dv" style="right:1049.50px;top:326.83px">16</span>
<span class="dv" style="right:995.30px;top:326.83px">65</span>
<span class="dv" style="right:927.00px;top:326.83px">99.05%</span>
<span class="dv" style="right:854.40px;top:326.83px">520,000</span>
<span class="dv" style="right:794.20px;top:326.83px">3%</span>
<span class="dv" style="right:724.30px;top:326.83px">520,000</span>
<span class="dv" style="right:649.80px;top:326.83px">520,000</span>
<span class="dv" style="right:598.20px;top:326.83px">3%</span>
<span class="dv" style="right:526.00px;top:326.83px">512,978</span>
<span class="dn" style="right:1485.60px;top:342.58px">Rural</span>
<span class="dv" style="right:1424.50px;top:342.58px">23</span>
<span class="dv" style="right:1362.00px;top:342.58px">0%</span>
<span class="dv" style="right:1302.50px;top:342.58px">259</span>
<span class="dv" style="right:1237.50px;top:342.58px">69</span>
<span class="dv" style="right:1178.30px;top:342.58px">13%</span>
<span class="dv" style="right:1123.50px;top:342.58px">874</span>
<span class="dv" style="right:1049.50px;top:342.58px">369</span>
<span class="dv" style="right:995.30px;top:342.58px">110</span>
<span class="dv" style="right:927.00px;top:342.58px">93.13%</span>
<span class="dv" style="right:854.40px;top:342.58px">960,000</span>
<span class="dv" style="right:794.20px;top:342.58px">14%</span>
<span class="dv" style="right:724.30px;top:342.58px">893,500</span>
<span class="dv" style="right:649.80px;top:342.58px">1,229,613</span>
<span class="dv" style="right:598.20px;top:342.58px">37%</span>
<span class="dv" style="right:526.00px;top:342.58px">1,110,343</span>
<span class="dv" style="right:446.00px;top:342.58px">907,800</span>
<span class="dv" style="right:394.40px;top:342.58px">0%</span>
<span class="dv" style="right:314.20px;top:342.58px">921,490</span>
<span class="dv" style="right:261.00px;top:342.58px">177</span>
<span class="dn" style="right:1485.60px;top:358.33px">Other</span>
<span class="dv" style="right:1438.50px;top:358.33px">-</span>
<span class="dv" style="right:1302.50px;top:358.33px">8</span>
<span class="dv" style="right:1237.50px;top:358.33px">3</span>
<span class="dv" style="right:1178.30px;top:358.33px">0%</span>
<span class="dv" style="right:1123.50px;top:358.33px">26</span>
<span class="dv" style="right:1049.50px;top:358.33px">12</span>
<span class="dv" style="right:724.30px;top:358.33px">881,500</span>
<span class="dv" style="right:526.00px;top:358.33px">870,438</span>
<span class="rb" style="right:1485.60px;top:385.21px">Foothills Region</span>
<span class="rn" style="right:1424.50px;top:385.28px">78</span>
<span class="rn" style="right:1362.00px;top:385.28px">-11%</span>
<span class="rn" style="right:1302.00px;top:385.28px">894</span>
<span class="rn" style="right:1237.00px;top:385.28px">141</span>
<span class="rn" style="right:1178.00px;top:385.28px">-10%</span>
<span class="rn" style="right:1118.40px;top:385.28px">2,131</span>
<span class="rn" style="right:1048.40px;top:385.28px">693</span>
<span class="rn" style="right:995.00px;top:385.28px">76</span>
<span class="rn" style="right:927.00px;top:385.28px">95.48%</span>
<span class="rn" style="right:854.40px;top:385.28px">375,000</span>
<span class="rn" style="right:794.20px;top:385.28px">-6%</span>
<span class="rn" style="right:723.70px;top:385.28px">405,000</span>
<span class="rn" style="right:649.80px;top:385.28px">499,742</span>
<span class="rn" style="right:598.20px;top:385.28px">7%</span>
<span class="rn" style="right:521.00px;top:385.28px">502,469</span>
<span class="rn" style="right:446.00px;top:385.28px">388,400</span>
<span class="rn" style="right:394.40px;top:385.28px">4%</span>
<span class="rn" style="right:314.20px;top:385.28px">385,350</span>
<span class="rn" style="right:261.00px;top:385.28px">189</span>
<span class="dn" style="right:1485.60px;top:400.58px">Blackie</span>
<span class="dv" style="right:1438.50px;top:400.58px">-</span>
<span class="dv" style="right:1302.50px;top:400.58px">6</span>
<span class="dv" style="right:1237.50px;top:400.58px">1</span>
<span class="dv" style="right:1178.30px;top:400.58px">0%</span>
<span class="dv" style="right:1123.50px;top:400.58px">14</span>
<span class="dv" style="right:1049.50px;top:400.58px">1</span>
<span class="dv" style="right:724.30px;top:400.58px">222,500</span>
<span class="dv" style="right:526.00px;top:400.58px">237,917</span>
<span class="dn" style="right:1485.60px;top:416.35px">Black Diamond</span>
<span class="dv" style="right:1424.50px;top:416.35px">4</span>
<span class="dv" style="right:1362.00px;top:416.35px">33%</span>
<span class="dv" style="right:1302.50px;top:416.35px">32</span>
<span class="dv" style="right:1237.50px;top:416.35px">4</span>
<span class="dv" style="right:1178.30px;top:416.35px">-56%</span>
<span class="dv" style="right:1123.50px;top:416.35px">82</span>
<span class="dv" style="right:1049.50px;top:416.35px">27</span>
<span class="dv" style="right:995.30px;top:416.35px">90</span>
<span class="dv" style="right:927.00px;top:416.35px">96.20%</span>
<span class="dv" style="right:854.40px;top:416.35px">349,500</span>
<span class="dv" style="right:794.20px;top:416.35px">4%</span>
<span class="dv" style="right:724.30px;top:416.35px">360,750</span>
<span class="dv" style="right:649.80px;top:416.35px">340,875</span>
<span class="dv" style="right:598.20px;top:416.35px">3%</span>
<span class="dv" style="right:526.00px;top:416.35px">349,188</span>
<span class="dn" style="right:1485.60px;top:432.11px">Cayley</span>
<span class="dv" style="right:1438.50px;top:432.11px">-</span>
<span class="dv" style="right:1302.50px;top:432.11px">10</span>
<span class="dv" style="right:1251.50px;top:432.11px">-</span>
<span class="dv" style="right:1123.50px;top:432.11px">21</span>
<span class="dv" style="right:1049.50px;top:432.11px">4</span>
<span class="dv" style="right:724.30px;top:432.11px">182,500</span>
<span class="dv" style="right:526.00px;top:432.11px">186,100</span>
<span class="dn" style="right:1485.60px;top:447.88px">De Winton</span>
<span class="dv" style="right:1438.50px;top:447.88px">-</span>
<span class="dv" style="right:1302.50px;top:447.88px">1</span>
<span class="dv" style="right:1251.50px;top:447.88px">-</span>
<span class="dv" style="right:1123.50px;top:447.88px">2</span>
<span class="dv" style="right:1049.50px;top:447.88px">1</span>
<span class="dv" style="right:724.30px;top:447.88px">385,000</span>
<span class="dv" style="right:526.00px;top:447.88px">385,000</span>
<span class="dn" style="right:1485.60px;top:463.65px">Heritage Pointe</span>
<span class="dv" style="right:1424.50px;top:463.65px">2</span>
<span class="dv" style="right:1362.00px;top:463.65px">-67%</span>
<span class="dv" style="right:1302.50px;top:463.65px">30</span>
<span class="dv" style="right:1237.50px;top:463.65px">6</span>
<span class="dv" style="right:1178.30px;top:463.65px">-14%</span>
<span class="dv" style="right:1123.50px;top:463.65px">96</span>
<span class="dv" style="right:1049.50px;top:463.65px">39</span>
<span class="dv" style="right:995.30px;top:463.65px">133</span>
<span class="dv" style="right:927.00px;top:463.65px">93.67%</span>
<span class="dv" style="right:854.40px;top:463.65px">997,500</span>
<span class="dv" style="right:794.20px;top:463.65px">15%</span>
<span class="dv" style="right:724.30px;top:463.65px">875,500</span>
<span class="dv" style="right:649.80px;top:463.65px">997,500</span>
<span class="dv" style="right:598.20px;top:463.65px">1%</span>
<span class="dv" style="right:526.00px;top:463.65px">993,792</span>
<span class="dn" style="right:1485.60px;top:479.41px">High River</span>
<span class="dv" style="right:1424.50px;top:479.41px">17</span>
<span class="dv" style="right:1362.00px;top:479.41px">-15%</span>
<span class="dv" style="right:1302.50px;top:479.41px">209</span>
<span class="dv" style="right:1237.50px;top:479.41px">25</span>
<span class="dv" style="right:1178.30px;top:479.41px">-19%</span>
<span class="dv" style="right:1123.50px;top:479.41px">376</span>
<span class="dv" style="right:1049.50px;top:479.41px">121</span>
<span class="dv" style="right:995.30px;top:479.41px">88</span>
<span class="dv" style="right:927.00px;top:479.41px">96.58%</span>
<span class="dv" style="right:854.40px;top:479.41px">289,000</span>
<span class="dv" style="right:794.20px;top:479.41px">-3%</span>
<span class="dv" style="right:724.30px;top:479.41px">314,000</span>
<span class="dv" style="right:649.80px;top:479.41px">274,929</span>
<span class="dv" style="right:598.20px;top:479.41px">-6%</span>
<span class="dv" style="right:526.00px;top:479.41px">312,980</span>
<span class="dv" style="right:446.00px;top:479.41px">350,000</span>
<span class="dv" style="right:394.40px;top:479.41px">4%</span>
<span class="dv" style="right:314.20px;top:479.41px">345,280</span>
<span class="dv" style="right:261.00px;top:479.41px">184</span>
<span class="dn" style="right:1485.60px;top:495.18px">Longview</span>
<span class="dv" style="right:1438.50px;top:495.18px">-</span>
<span class="dv" style="right:1316.50px;top:495.18px">-</span>
<span class="dv" style="right:1251.50px;top:495.18px">-</span>
<span class="dv" style="right:1123.50px;top:495.18px">1</span>
<span class="dv" style="right:1063.50px;top:495.18px">-</span>
<span class="dn" style="right:1485.60px;top:510.95px">Okotoks</span>
<span class="dv" style="right:1424.50px;top:510.95px">40</span>
<span class="dv" style="right:1362.00px;top:510.95px">-11%</span>
<span class="dv" style="right:1302.50px;top:510.95px">428</span>
<span class="dv" style="right:1237.50px;top:510.95px">69</span>
<span class="dv" style="right:1178.30px;top:510.95px">13%</span>
<span class="dv" style="right:1123.50px;top:510.95px">936</span>
<span class="dv" style="right:1049.50px;top:510.95px">232</span>
<span class="dv" style="right:995.30px;top:510.95px">57</span>
<span class="dv" style="right:927.00px;top:510.95px">97.16%</span>
<span class="dv" style="right:854.40px;top:510.95px">370,000</span>
<span class="dv" style="right:794.20px;top:510.95px">-8%</span>
<span class="dv" style="right:724.30px;top:510.95px">419,500</span>
<span class="dv" style="right:649.80px;top:510.95px">408,803</span>
<span class="dv" style="right:598.20px;top:510.95px">0%</span>
<span class="dv" style="right:526.00px;top:510.95px">443,567</span>
<span class="dv" style="right:446.00px;top:510.95px">430,800</span>
<span class="dv" style="right:394.40px;top:510.95px">4%</span>
<span class="dv" style="right:314.20px;top:510.95px">428,400</span>
<span class="dv" style="right:261.00px;top:510.95px">193</span>
<span class="dn" style="right:1485.60px;top:526.71px">Priddis Greens</span>
<span class="dv" style="right:1438.50px;top:526.71px">-</span>
<span class="dv" style="right:1302.50px;top:526.71px">1</span>
<span class="dv" style="right:1251.50px;top:526.71px">-</span>
<span class="dv" style="right:1123.50px;top:526.71px">2</span>
<span class="dv" style="right:1049.50px;top:526.71px">1</span>
<span class="dv" style="right:724.30px;top:526.71px">385,000</span>
<span class="dv" style="right:526.00px;top:526.71px">385,000</span>
<span class="dn" style="right:1485.60px;top:542.48px">Rural</span>
<span class="dv" style="right:1424.50px;top:542.48px">13</span>
<span class="dv" style="right:1362.00px;top:542.48px">18%</span>
<span class="dv" style="right:1302.50px;top:542.48px">125</span>
<span class="dv" style="right:1237.50px;top:542.48px">32</span>
<span class="dv" style="right:1178.30px;top:542.48px">-11%</span>
<span class="dv" style="right:1123.50px;top:542.48px">480</span>
<span class="dv" style="right:1049.50px;top:542.48px">228</span>
<span class="dv" style="right:995.30px;top:542.48px">86</span>
<span class="dv" style="right:927.00px;top:542.48px">93.25%</span>
<span class="dv" style="right:854.40px;top:542.48px">930,000</span>
<span class="dv" style="right:794.20px;top:542.48px">13%</span>
<span class="dv" style="right:724.30px;top:542.48px">790,000</span>
<span class="dv" style="right:649.80px;top:542.48px">1,066,730</span>
<span class="dv" style="right:598.20px;top:542.48px">33%</span>
<span class="dv" style="right:526.00px;top:542.48px">1,010,753</span>
<span class="dv" style="right:446.00px;top:542.48px">475,000</span>
<span class="dv" style="right:394.40px;top:542.48px">3%</span>
<span class="dv" style="right:314.20px;top:542.48px">471,290</span>
<span class="dv" style="right:261.00px;top:542.48px">195</span>
<span class="dn" style="right:1485.60px;top:558.25px">Turner Valley</span>
<span class="dv" style="right:1424.50px;top:558.25px">2</span>
<span class="dv" style="right:1362.00px;top:558.25px">-33%</span>
<span class="dv" style="right:1302.50px;top:558.25px">46</span>
<span class="dv" style="right:1237.50px;top:558.25px">4</span>
<span class="dv" style="right:1178.30px;top:558.25px">-56%</span>
<span class="dv" style="right:1123.50px;top:558.25px">94</span>
<span class="dv" style="right:1049.50px;top:558.25px">26</span>
<span class="dv" style="right:995.30px;top:558.25px">194</span>
<span class="dv" style="right:927.00px;top:558.25px">98.54%</span>
<span class="dv" style="right:854.40px;top:558.25px">364,000</span>
<span class="dv" style="right:794.20px;top:558.25px">11%</span>
<span class="dv" style="right:724.30px;top:558.25px">350,000</span>
<span class="dv" style="right:649.80px;top:558.25px">364,000</span>
<span class="dv" style="right:598.20px;top:558.25px">16%</span>
<span class="dv" style="right:526.00px;top:558.25px">355,974</span>
<span class="dv" style="right:446.00px;top:558.25px">300,800</span>
<span class="dv" style="right:394.40px;top:558.25px">3%</span>
<span class="dv" style="right:314.20px;top:558.25px">299,230</span>
<span class="dv" style="right:261.00px;top:558.25px">180</span>
<span class="dn" style="right:1485.60px;top:574.01px">Other</span>
<span class="dv" style="right:1438.50px;top:574.01px">-</span>
<span class="dv" style="right:1316.50px;top:574.01px">-</span>
<span class="dv" style="right:1251.50px;top:574.01px">-</span>
<span class="dv" style="right:1123.50px;top:574.01px">5</span>
<span class="dv" style="right:1049.50px;top:574.01px">2</span>
<span class="rb" style="right:1485.60px;top:602.21px">Wheatland Region</span>
<span class="rn" style="right:1424.50px;top:602.28px">21</span>
<span class="rn" style="right:1362.00px;top:602.28px">-32%</span>
<span class="rn" style="right:1302.00px;top:602.28px">254</span>
<span class="rn" style="right:1237.00px;top:602.28px">45</span>
<span class="rn" style="right:1178.00px;top:602.28px">-34%</span>
<span class="rn" style="right:1118.40px;top:602.28px">677</span>
<span class="rn" style="right:1048.40px;top:602.28px">232</span>
<span class="rn" style="right:995.00px;top:602.28px">94</span>
<span class="rn" style="right:927.00px;top:602.28px">94.59%</span>
<span class="rn" style="right:854.40px;top:602.28px">295,000</span>
<span class="rn" style="right:794.20px;top:602.28px">-10%</span>
<span class="rn" style="right:723.70px;top:602.28px">328,250</span>
<span class="rn" style="right:649.80px;top:602.28px">343,543</span>
<span class="rn" style="right:598.20px;top:602.28px">-2%</span>
<span class="rn" style="right:521.00px;top:602.28px">335,390</span>
<span class="rn" style="right:446.00px;top:602.28px">225,300</span>
<span class="rn" style="right:394.40px;top:602.28px">-4%</span>
<span class="rn" style="right:314.20px;top:602.28px">224,350</span>
<span class="rn" style="right:261.00px;top:602.28px">207</span>
<span class="dn" style="right:1485.60px;top:617.58px">Rural Wheatland</span>
<span class="dv" style="right:1424.50px;top:617.58px">3</span>
<span class="dv" style="right:1362.00px;top:617.58px">50%</span>
<span class="dv" style="right:1302.50px;top:617.58px">25</span>
<span class="dv" style="right:1237.50px;top:617.58px">4</span>
<span class="dv" style="right:1178.30px;top:617.58px">-64%</span>
<span class="dv" style="right:1123.50px;top:617.58px">92</span>
<span class="dv" style="right:1049.50px;top:617.58px">36</span>
<span class="dv" style="right:995.30px;top:617.58px">118</span>
<span class="dv" style="right:927.00px;top:617.58px">92.00%</span>
<span class="dv" style="right:854.40px;top:617.58px">622,500</span>
<span class="dv" style="right:794.20px;top:617.58px">-40%</span>
<span class="dv" style="right:724.30px;top:617.58px">440,000</span>
<span class="dv" style="right:649.80px;top:617.58px">560,833</span>
<span class="dv" style="right:598.20px;top:617.58px">-46%</span>
<span class="dv" style="right:526.00px;top:617.58px">523,880</span>
<span class="dv" style="right:446.00px;top:617.58px">225,300</span>
<span class="dv" style="right:394.40px;top:617.58px">-4%</span>
<span class="dv" style="right:314.20px;top:617.58px">224,350</span>
<span class="dv" style="right:261.00px;top:617.58px">207</span>
<span class="dn" style="right:1485.60px;top:633.22px">Carseland</span>
<span class="dv" style="right:1438.50px;top:633.22px">-</span>
<span class="dv" style="right:1302.50px;top:633.22px">6</span>
<span class="dv" style="right:1251.50px;top:633.22px">-</span>
<span class="dv" style="right:1123.50px;top:633.22px">16</span>
<span class="dv" style="right:1049.50px;top:633.22px">5</span>
<span class="dv" style="right:724.30px;top:633.22px">197,450</span>
<span class="dv" style="right:526.00px;top:633.22px">213,233</span>
<span class="dn" style="right:1485.60px;top:648.87px">Lyalta</span>
<span class="dv" style="right:1424.50px;top:648.87px">1</span>
<span class="dv" style="right:1302.50px;top:648.87px">7</span>
<span class="dv" style="right:1237.50px;top:648.87px">2</span>
<span class="dv" style="right:1178.30px;top:648.87px">100%</span>
<span class="dv" style="right:1123.50px;top:648.87px">27</span>
<span class="dv" style="right:1049.50px;top:648.87px">12</span>
<span class="dv" style="right:995.30px;top:648.87px">157</span>
<span class="dv" style="right:927.00px;top:648.87px">105.58%</span>
<span class="dv" style="right:854.40px;top:648.87px">475,000</span>
<span class="dv" style="right:724.30px;top:648.87px">479,000</span>
<span class="dv" style="right:649.80px;top:648.87px">475,000</span>
<span class="dv" style="right:526.00px;top:648.87px">465,786</span>
<span class="dn" style="right:1485.60px;top:664.51px">Rockyford</span>
<span class="dv" style="right:1438.50px;top:664.51px">-</span>
<span class="dv" style="right:1302.50px;top:664.51px">6</span>
<span class="dv" style="right:1237.50px;top:664.51px">2</span>
<span class="dv" style="right:1178.30px;top:664.51px">0%</span>
<span class="dv" style="right:1123.50px;top:664.51px">20</span>
<span class="dv" style="right:1049.50px;top:664.51px">6</span>
<span class="dv" style="right:724.30px;top:664.51px">181,500</span>
<span class="dv" style="right:526.00px;top:664.51px">172,417</span>
<span class="dn" style="right:1485.60px;top:680.15px">Strathmore</span>
<span class="dv" style="right:1424.50px;top:680.15px">17</span>
<span class="dv" style="right:1362.00px;top:680.15px">-29%</span>
<span class="dv" style="right:1302.50px;top:680.15px">199</span>
<span class="dv" style="right:1237.50px;top:680.15px">36</span>
<span class="dv" style="right:1178.30px;top:680.15px">-29%</span>
<span class="dv" style="right:1123.50px;top:680.15px">493</span>
<span class="dv" style="right:1049.50px;top:680.15px">154</span>
<span class="dv" style="right:995.30px;top:680.15px">86</span>
<span class="dv" style="right:927.00px;top:680.15px">94.56%</span>
<span class="dv" style="right:854.40px;top:680.15px">270,000</span>
<span class="dv" style="right:794.20px;top:680.15px">-21%</span>
<span class="dv" style="right:724.30px;top:680.15px">323,000</span>
<span class="dv" style="right:649.80px;top:680.15px">297,465</span>
<span class="dv" style="right:598.20px;top:680.15px">-8%</span>
<span class="dv" style="right:526.00px;top:680.15px">318,332</span>
<span class="dv" style="right:446.00px;top:680.15px">392,800</span>
<span class="dv" style="right:394.40px;top:680.15px">-3%</span>
<span class="dv" style="right:314.20px;top:680.15px">391,450</span>
<span class="dv" style="right:261.00px;top:680.15px">216</span>
<span class="dn" style="right:1485.60px;top:695.79px">Gleichen</span>
<span class="dv" style="right:1438.50px;top:695.79px">-</span>
<span class="dv" style="right:1302.50px;top:695.79px">3</span>
<span class="dv" style="right:1251.50px;top:695.79px">-</span>
<span class="dv" style="right:1123.50px;top:695.79px">6</span>
<span class="dv" style="right:1049.50px;top:695.79px">3</span>
<span class="dv" style="right:724.30px;top:695.79px">62,000</span>
<span class="dv" style="right:526.00px;top:695.79px">83,500</span>
<span class="dn" style="right:1485.60px;top:711.44px">Other</span>
<span class="dv" style="right:1438.50px;top:711.44px">-</span>
<span class="dv" style="right:1302.50px;top:711.44px">11</span>
<span class="dv" style="right:1237.50px;top:711.44px">1</span>
<span class="dv" style="right:1178.30px;top:711.44px">0%</span>
<span class="dv" style="right:1123.50px;top:711.44px">29</span>
<span class="dv" style="right:1049.50px;top:711.44px">19</span>
<span class="dv" style="right:724.30px;top:711.44px">240,000</span>
<span class="dv" style="right:526.00px;top:711.44px">288,136</span>
<span class="rb" style="right:1485.60px;top:739.21px">Mountainview Region</span>
<span class="rn" style="right:1424.50px;top:739.28px">37</span>
<span class="rn" style="right:1362.00px;top:739.28px">3%</span>
<span class="rn" style="right:1302.00px;top:739.28px">398</span>
<span class="rn" style="right:1237.00px;top:739.28px">65</span>
<span class="rn" style="right:1178.00px;top:739.28px">-3%</span>
<span class="rn" style="right:1118.40px;top:739.28px">936</span>
<span class="rn" style="right:1048.40px;top:739.28px">395</span>
<span class="rn" style="right:995.00px;top:739.28px">160</span>
<span class="rn" style="right:927.00px;top:739.28px">94.70%</span>
<span class="rn" style="right:854.40px;top:739.28px">339,000</span>
<span class="rn" style="right:794.20px;top:739.28px">8%</span>
<span class="rn" style="right:723.70px;top:739.28px">319,950</span>
<span class="rn" style="right:649.80px;top:739.28px">372,300</span>
<span class="rn" style="right:598.20px;top:739.28px">9%</span>
<span class="rn" style="right:521.00px;top:739.28px">353,995</span>
<span class="rn" style="right:446.00px;top:739.28px">306,100</span>
<span class="rn" style="right:394.40px;top:739.28px">-2%</span>
<span class="rn" style="right:314.20px;top:739.28px">305,980</span>
<span class="rn" style="right:261.00px;top:739.28px">192</span>
<span class="dn" style="right:1485.60px;top:754.58px">Rural Mountainview</span>
<span class="dv" style="right:1424.50px;top:754.58px">6</span>
<span class="dv" style="right:1362.00px;top:754.58px">-25%</span>
<span class="dv" style="right:1302.50px;top:754.58px">87</span>
<span class="dv" style="right:1237.50px;top:754.58px">9</span>
<span class="dv" style="right:1178.30px;top:754.58px">-57%</span>
<span class="dv" style="right:1123.50px;top:754.58px">226</span>
<span class="dv" style="right:1049.50px;top:754.58px">95</span>
<span class="dv" style="right:995.30px;top:754.58px">154</span>
<span class="dv" style="right:927.00px;top:754.58px">92.02%</span>
<span class="dv" style="right:854.40px;top:754.58px">640,500</span>
<span class="dv" style="right:794.20px;top:754.58px">16%</span>
<span class="dv" style="right:724.30px;top:754.58px">460,000</span>
<span class="dv" style="right:649.80px;top:754.58px">653,333</span>
<span class="dv" style="right:598.20px;top:754.58px">23%</span>
<span class="dv" style="right:526.00px;top:754.58px">514,300</span>
<span class="dv" style="right:446.00px;top:754.58px">246,900</span>
<span class="dv" style="right:394.40px;top:754.58px">-1%</span>
<span class="dv" style="right:314.20px;top:754.58px">247,430</span>
<span class="dv" style="right:261.00px;top:754.58px">170</span>
<span class="dn" style="right:1485.60px;top:770.37px">Carstairs</span>
<span class="dv" style="right:1424.50px;top:770.37px">9</span>
<span class="dv" style="right:1362.00px;top:770.37px">50%</span>
<span class="dv" style="right:1302.50px;top:770.37px">76</span>
<span class="dv" style="right:1237.50px;top:770.37px">15</span>
<span class="dv" style="right:1178.30px;top:770.37px">25%</span>
<span class="dv" style="right:1123.50px;top:770.37px">200</span>
<span class="dv" style="right:1049.50px;top:770.37px">78</span>
<span class="dv" style="right:995.30px;top:770.37px">159</span>
<span class="dv" style="right:927.00px;top:770.37px">96.07%</span>
<span class="dv" style="right:854.40px;top:770.37px">375,000</span>
<span class="dv" style="right:794.20px;top:770.37px">2%</span>
<span class="dv" style="right:724.30px;top:770.37px">336,500</span>
<span class="dv" style="right:649.80px;top:770.37px">321,056</span>
<span class="dv" style="right:598.20px;top:770.37px">-11%</span>
<span class="dv" style="right:526.00px;top:770.37px">335,680</span>
<span class="dv" style="right:446.00px;top:770.37px">315,600</span>
<span class="dv" style="right:394.40px;top:770.37px">-2%</span>
<span class="dv" style="right:314.20px;top:770.37px">314,440</span>
<span class="dv" style="right:261.00px;top:770.37px">175</span>
<span class="dn" style="right:1485.60px;top:786.15px">Cremona</span>
<span class="dv" style="right:1438.50px;top:786.15px">-</span>
<span class="dv" style="right:1302.50px;top:786.15px">1</span>
<span class="dv" style="right:1237.50px;top:786.15px">3</span>
<span class="dv" style="right:1178.30px;top:786.15px">200%</span>
<span class="dv" style="right:1123.50px;top:786.15px">8</span>
<span class="dv" style="right:1049.50px;top:786.15px">8</span>
<span class="dv" style="right:724.30px;top:786.15px">242,500</span>
<span class="dv" style="right:526.00px;top:786.15px">242,500</span>
<span class="dn" style="right:1485.60px;top:801.94px">Didsbury</span>
<span class="dv" style="right:1424.50px;top:801.94px">5</span>
<span class="dv" style="right:1362.00px;top:801.94px">-55%</span>
<span class="dv" style="right:1302.50px;top:801.94px">71</span>
<span class="dv" style="right:1237.50px;top:801.94px">17</span>
<span class="dv" style="right:1178.30px;top:801.94px">89%</span>
<span class="dv" style="right:1123.50px;top:801.94px">144</span>
<span class="dv" style="right:1049.50px;top:801.94px">56</span>
<span class="dv" style="right:995.30px;top:801.94px">51</span>
<span class="dv" style="right:927.00px;top:801.94px">97.14%</span>
<span class="dv" style="right:854.40px;top:801.94px">212,000</span>
<span class="dv" style="right:794.20px;top:801.94px">-27%</span>
<span class="dv" style="right:724.30px;top:801.94px">269,000</span>
<span class="dv" style="right:649.80px;top:801.94px">201,200</span>
<span class="dv" style="right:598.20px;top:801.94px">-19%</span>
<span class="dv" style="right:526.00px;top:801.94px">277,403</span>
<span class="dv" style="right:446.00px;top:801.94px">298,900</span>
<span class="dv" style="right:394.40px;top:801.94px">-1%</span>
<span class="dv" style="right:314.20px;top:801.94px">296,390</span>
<span class="dv" style="right:261.00px;top:801.94px">194</span>
<span class="dn" style="right:1485.60px;top:817.72px">Olds</span>
<span class="dv" style="right:1424.50px;top:817.72px">12</span>
<span class="dv" style="right:1362.00px;top:817.72px">71%</span>
<span class="dv" style="right:1302.50px;top:817.72px">110</span>
<span class="dv" style="right:1237.50px;top:817.72px">10</span>
<span class="dv" style="right:1178.30px;top:817.72px">-52%</span>
<span class="dv" style="right:1123.50px;top:817.72px">235</span>
<span class="dv" style="right:1049.50px;top:817.72px">104</span>
<span class="dv" style="right:995.30px;top:817.72px">216</span>
<span class="dv" style="right:927.00px;top:817.72px">94.10%</span>
<span class="dv" style="right:854.40px;top:817.72px">299,000</span>
<span class="dv" style="right:794.20px;top:817.72px">1%</span>
<span class="dv" style="right:724.30px;top:817.72px">297,500</span>
<span class="dv" style="right:649.80px;top:817.72px">312,382</span>
<span class="dv" style="right:598.20px;top:817.72px">7%</span>
<span class="dv" style="right:526.00px;top:817.72px">308,224</span>
<span class="dv" style="right:446.00px;top:817.72px">340,100</span>
<span class="dv" style="right:394.40px;top:817.72px">-2%</span>
<span class="dv" style="right:314.20px;top:817.72px">339,080</span>
<span class="dv" style="right:261.00px;top:817.72px">199</span>
<span class="dn" style="right:1485.60px;top:833.51px">Sundre</span>
<span class="dv" style="right:1424.50px;top:833.51px">3</span>
<span class="dv" style="right:1362.00px;top:833.51px">50%</span>
<span class="dv" style="right:1302.50px;top:833.51px">49</span>
<span class="dv" style="right:1237.50px;top:833.51px">9</span>
<span class="dv" style="right:1178.30px;top:833.51px">350%</span>
<span class="dv" style="right:1123.50px;top:833.51px">107</span>
<span class="dv" style="right:1049.50px;top:833.51px">45</span>
<span class="dv" style="right:995.30px;top:833.51px">102</span>
<span class="dv" style="right:927.00px;top:833.51px">96.56%</span>
<span class="dv" style="right:854.40px;top:833.51px">337,000</span>
<span class="dv" style="right:794.20px;top:833.51px">15%</span>
<span class="dv" style="right:724.30px;top:833.51px">270,000</span>
<span class="dv" style="right:649.80px;top:833.51px">270,333</span>
<span class="dv" style="right:598.20px;top:833.51px">-8%</span>
<span class="dv" style="right:526.00px;top:833.51px">287,173</span>
<span class="dv" style="right:446.00px;top:833.51px">268,700</span>
<span class="dv" style="right:394.40px;top:833.51px">-2%</span>
<span class="dv" style="right:314.20px;top:833.51px">267,470</span>
<span class="dv" style="right:261.00px;top:833.51px">176</span>
<span class="dn" style="right:1485.60px;top:849.29px">Other</span>
<span class="dv" style="right:1424.50px;top:849.29px">2</span>
<span class="dv" style="right:1362.00px;top:849.29px">100%</span>
<span class="dv" style="right:1302.50px;top:849.29px">4</span>
<span class="dv" style="right:1237.50px;top:849.29px">2</span>
<span class="dv" style="right:1178.30px;top:849.29px">100%</span>
<span class="dv" style="right:1123.50px;top:849.29px">16</span>
<span class="dv" style="right:1049.50px;top:849.29px">9</span>
<span class="dv" style="right:995.30px;top:849.29px">218</span>
<span class="dv" style="right:927.00px;top:849.29px">98.64%</span>
<span class="dv" style="right:854.40px;top:849.29px">700,000</span>
<span class="dv" style="right:794.20px;top:849.29px">155%</span>
<span class="dv" style="right:724.30px;top:849.29px">700,000</span>
<span class="dv" style="right:649.80px;top:849.29px">700,000</span>
<span class="dv" style="right:598.20px;top:849.29px">155%</span>
<span class="dv" style="right:526.00px;top:849.29px">680,000</span>
<span class="rb" style="right:1485.60px;top:876.21px">Kneehill Region</span>
<span class="rn" style="right:1424.50px;top:876.28px">8</span>
<span class="rn" style="right:1362.00px;top:876.28px">60%</span>
<span class="rn" style="right:1302.00px;top:876.28px">77</span>
<span class="rn" style="right:1237.00px;top:876.28px">14</span>
<span class="rn" style="right:1178.00px;top:876.28px">-18%</span>
<span class="rn" style="right:1118.40px;top:876.28px">176</span>
<span class="rn" style="right:1048.40px;top:876.28px">95</span>
<span class="rn" style="right:995.00px;top:876.28px">126</span>
<span class="rn" style="right:927.00px;top:876.28px">95.84%</span>
<span class="rn" style="right:854.40px;top:876.28px">227,500</span>
<span class="rn" style="right:794.20px;top:876.28px">-10%</span>
<span class="rn" style="right:723.70px;top:876.28px">232,250</span>
<span class="rn" style="right:649.80px;top:876.28px">288,750</span>
<span class="rn" style="right:598.20px;top:876.28px">30%</span>
<span class="rn" style="right:521.00px;top:876.28px">247,975</span>
<span class="dn" style="right:1485.60px;top:891.58px">Rural Kneehill</span>
<span class="dv" style="right:1424.50px;top:891.58px">1</span>
<span class="dv" style="right:1302.50px;top:891.58px">11</span>
<span class="dv" style="right:1237.50px;top:891.58px">3</span>
<span class="dv" style="right:1178.30px;top:891.58px">200%</span>
<span class="dv" style="right:1123.50px;top:891.58px">26</span>
<span class="dv" style="right:1049.50px;top:891.58px">13</span>
<span class="dv" style="right:995.30px;top:891.58px">88</span>
<span class="dv" style="right:927.00px;top:891.58px">90.95%</span>
<span class="dv" style="right:854.40px;top:891.58px">432,000</span>
<span class="dv" style="right:724.30px;top:891.58px">425,000</span>
<span class="dv" style="right:649.80px;top:891.58px">432,000</span>
<span class="dv" style="right:526.00px;top:891.58px">416,273</span>
<span class="dn" style="right:1485.60px;top:907.37px">Acme</span>
<span class="dv" style="right:1424.50px;top:907.37px">1</span>
<span class="dv" style="right:1362.00px;top:907.37px">-50%</span>
<span class="dv" style="right:1302.50px;top:907.37px">12</span>
<span class="dv" style="right:1237.50px;top:907.37px">3</span>
<span class="dv" style="right:1178.30px;top:907.37px">-40%</span>
<span class="dv" style="right:1123.50px;top:907.37px">27</span>
<span class="dv" style="right:1049.50px;top:907.37px">13</span>
<span class="dv" style="right:995.30px;top:907.37px">23</span>
<span class="dv" style="right:927.00px;top:907.37px">96.72%</span>
<span class="dv" style="right:854.40px;top:907.37px">174,000</span>
<span class="dv" style="right:794.20px;top:907.37px">-10%</span>
<span class="dv" style="right:724.30px;top:907.37px">217,828</span>
<span class="dv" style="right:649.80px;top:907.37px">174,000</span>
<span class="dv" style="right:598.20px;top:907.37px">-10%</span>
<span class="dv" style="right:526.00px;top:907.37px">206,971</span>
<span class="dn" style="right:1485.60px;top:923.15px">Linden</span>
<span class="dv" style="right:1424.50px;top:923.15px">2</span>
<span class="dv" style="right:1302.50px;top:923.15px">8</span>
<span class="dv" style="right:1237.50px;top:923.15px">2</span>
<span class="dv" style="right:1178.30px;top:923.15px">-60%</span>
<span class="dv" style="right:1123.50px;top:923.15px">13</span>
<span class="dv" style="right:1049.50px;top:923.15px">5</span>
<span class="dv" style="right:995.30px;top:923.15px">34</span>
<span class="dv" style="right:927.00px;top:923.15px">93.61%</span>
<span class="dv" style="right:854.40px;top:923.15px">212,500</span>
<span class="dv" style="right:724.30px;top:923.15px">180,250</span>
<span class="dv" style="right:649.80px;top:923.15px">212,500</span>
<span class="dv" style="right:526.00px;top:923.15px">202,688</span>
<span class="dn" style="right:1485.60px;top:938.94px">Three Hills</span>
<span class="dv" style="right:1424.50px;top:938.94px">3</span>
<span class="dv" style="right:1362.00px;top:938.94px">50%</span>
<span class="dv" style="right:1302.50px;top:938.94px">26</span>
<span class="dv" style="right:1237.50px;top:938.94px">2</span>
<span class="dv" style="right:1178.30px;top:938.94px">-33%</span>
<span class="dv" style="right:1123.50px;top:938.94px">56</span>
<span class="dv" style="right:1049.50px;top:938.94px">34</span>
<span class="dv" style="right:995.30px;top:938.94px">106</span>
<span class="dv" style="right:927.00px;top:938.94px">98.87%</span>
<span class="dv" style="right:854.40px;top:938.94px">460,000</span>
<span class="dv" style="right:794.20px;top:938.94px">30%</span>
<span class="dv" style="right:724.30px;top:938.94px">230,375</span>
<span class="dv" style="right:649.80px;top:938.94px">363,000</span>
<span class="dv" style="right:598.20px;top:938.94px">3%</span>
<span class="dv" style="right:526.00px;top:938.94px">236,029</span>
<span class="dn" style="right:1485.60px;top:954.72px">Torrington</span>
<span class="dv" style="right:1438.50px;top:954.72px">-</span>
<span class="dv" style="right:1302.50px;top:954.72px">1</span>
<span class="dv" style="right:1251.50px;top:954.72px">-</span>
<span class="dv" style="right:1123.50px;top:954.72px">5</span>
<span class="dv" style="right:1063.50px;top:954.72px">-</span>
<span class="dv" style="right:724.30px;top:954.72px">43,500</span>
<span class="dv" style="right:526.00px;top:954.72px">43,500</span>
<span class="dn" style="right:1485.60px;top:970.51px">Trochu</span>
<span class="dv" style="right:1424.50px;top:970.51px">1</span>
<span class="dv" style="right:1362.00px;top:970.51px">0%</span>
<span class="dv" style="right:1302.50px;top:970.51px">11</span>
<span class="dv" style="right:1237.50px;top:970.51px">2</span>
<span class="dv" style="right:1178.30px;top:970.51px">100%</span>
<span class="dv" style="right:1123.50px;top:970.51px">26</span>
<span class="dv" style="right:1049.50px;top:970.51px">23</span>
<span class="dv" style="right:995.30px;top:970.51px">507</span>
<span class="dv" style="right:927.00px;top:970.51px">95.05%</span>
<span class="dv" style="right:854.40px;top:970.51px">190,000</span>
<span class="dv" style="right:794.20px;top:970.51px">850%</span>
<span class="dv" style="right:724.30px;top:970.51px">175,000</span>
<span class="dv" style="right:649.80px;top:970.51px">190,000</span>
<span class="dv" style="right:598.20px;top:970.51px">850%</span>
<span class="dv" style="right:526.00px;top:970.51px">217,705</span>
<span class="dn" style="right:1485.60px;top:986.29px">Other</span>
<span class="dv" style="right:1438.50px;top:986.29px">-</span>
<span class="dv" style="right:1302.50px;top:986.29px">8</span>
<span class="dv" style="right:1237.50px;top:986.29px">2</span>
<span class="dv" style="right:1178.30px;top:986.29px">0%</span>
<span class="dv" style="right:1123.50px;top:986.29px">23</span>
<span class="dv" style="right:1049.50px;top:986.29px">7</span>
<span class="dv" style="right:724.30px;top:986.29px">225,000</span>
<span class="dv" style="right:526.00px;top:986.29px">229,363</span>
<div id="taskbar"></div>
<svg style="position:absolute;left:23.5px;top:1037.5px" width="25" height="25" viewBox="0 0 26 26"><path d="M0 3.6L10.5 2.2V12.3H0Z M12 2L25.5 0V12.3H12Z M0 13.7H10.5V23.8L0 22.4Z M12 13.7H25.5V26L12 24Z" fill="#fff"/></svg>
<div id="search"></div>
<div class="r" style="left:85.5px;top:1033.5px;width:32.5px;height:32.5px;border:4px solid #000;border-radius:50%;box-shadow:0 0 1px 1px rgba(0,0,0,.4)"></div>
<div id="stext">Type here to search</div>
<svg style="position:absolute;left:548px;top:1037px" width="18" height="26" viewBox="0 0 18 26"><rect x="5" y="1" width="8" height="15" rx="4" fill="none" stroke="#333" stroke-width="1.6"/><path d="M1.5 11.5C1.5 16 4.5 19.5 9 19.5C13.5 19.5 16.5 16 16.5 11.5M9 19.5V24.5M4.5 24.5H13.5" stroke="#333" stroke-width="1.6" fill="none"/></svg>
<svg style="position:absolute;left:611px;top:1037px" width="27" height="26" viewBox="0 0 27 26"><path d="M1.2 1V4.4H16.7V1M1.2 24.5V21H16.7V24.5M23.5 1V24.5" stroke="#fff" stroke-width="1.3" fill="none"/><rect x="1.2" y="8" width="15.5" height="9.7" fill="none" stroke="#fff" stroke-width="1.3"/><rect x="22" y="8" width="3" height="3" fill="#fff"/></svg>
<svg style="position:absolute;left:683px;top:1031px" width="36" height="36" viewBox="0 0 36 36"><path d="M12 11V7C12 2 24 2 24 7V11M14 11V7.5C14 4 22 4 22 7.5V11" stroke="#fff" stroke-width="1.4" fill="none"/><rect x="1" y="9" width="34" height="26" fill="#fff"/><rect x="11" y="14" width="6" height="6" fill="#f35325"/><rect x="18.5" y="14" width="6" height="6" fill="#81bc06"/><rect x="11" y="21.5" width="6" height="6" fill="#05a6f0"/><rect x="18.5" y="21.5" width="6" height="6" fill="#ffba08"/></svg>
<svg style="position:absolute;left:760px;top:1035px" width="32" height="28" viewBox="0 0 32 28"><path d="M0 2H11L13 4H32V26H0Z" fill="#f8d775"/><rect x="0" y="6" width="32" height="20" fill="#fde18c"/><rect x="2" y="3" width="8" height="1.5" fill="#5ca6d8"/><path d="M6 27V15H26V27H21V20H11V27Z" fill="#2d8fd6"/><path d="M8 15H24V17H8Z" fill="#50b0f0"/></svg>
<div class="r" style="left:815px;top:1020px;width:73px;height:60px;background:#464a4d"></div>
<div class="r" style="left:815px;top:1077px;width:73px;height:3px;background:#f5d6b2"></div>
<svg style="position:absolute;left:835px;top:1033px" width="32" height="34" viewBox="0 0 32 34"><path d="M2 14C3 5 10 0 18 0C27 0 32 7 31.5 17H11C11.5 24 17 27 22.5 27C26 27 29 26 31 24.5V31.5C28.5 33 25 34 21 34C12 34 6 29 6 21C6 17 7.5 13 10 11C8 12.5 5 14 2 18ZM11.2 12.5H22.8C22.8 8.5 20 6 17 6C14 6 11.5 8.5 11.2 12.5Z" fill="#0c7fd9"/></svg>
<svg style="position:absolute;left:1481px;top:1037px" width="24" height="24" viewBox="0 0 24 24"><circle cx="15.5" cy="6" r="4.3" stroke="#fff" stroke-width="1.5" fill="none"/><path d="M9.5 17C10 12.5 13 11 15.5 11C19 11 22.5 13.5 22.5 17" stroke="#fff" stroke-width="1.5" fill="none"/><circle cx="7" cy="11.5" r="3.6" stroke="#fff" stroke-width="1.5" fill="#101a22"/><path d="M1 22.5C1 18.5 4 16 7 16C10 16 13 18.5 13 22.5" stroke="#fff" stroke-width="1.5" fill="none"/></svg>
<svg style="position:absolute;left:1536px;top:1044px" width="20" height="12" viewBox="0 0 20 12"><path d="M1 11L10 2L19 11" stroke="#fff" stroke-width="1.4" fill="none"/></svg>
<svg style="position:absolute;left:1569px;top:1040px" width="27" height="18" viewBox="0 0 27 18"><rect x="5" y="5" width="19" height="12" fill="none" stroke="#fff" stroke-width="1.4"/><rect x="7" y="7" width="15" height="8" fill="#fff"/><rect x="24" y="8.5" width="2" height="5" fill="#fff"/><path d="M2 0V4M5 0V4M0.5 4H6.5V7C6.5 9 5 10 3.5 10V14" stroke="#fff" stroke-width="1.3" fill="#101a22"/></svg>
<svg style="position:absolute;left:1610px;top:1041px" width="21" height="20" viewBox="0 0 21 20"><path d="M1 19C1 9 8 1.5 19 1.5M5 19C5 11 10.5 5.5 19 5.5M9 19C9 13 13 9.5 19 9.5" stroke="#fff" stroke-width="1.3" fill="none"/><circle cx="18" cy="17.5" r="2" fill="#fff"/></svg>
<svg style="position:absolute;left:1643px;top:1041px" width="23" height="20" viewBox="0 0 23 20"><path d="M6 0L0 4L6 8L0 12L6 16L11.5 12L17 16L23 12L17 8L23 4L17 0L11.5 4Z M6 8L11.5 12L17 8L11.5 4Z M6 17.5L11.5 20L17 17.5L11.5 13.5Z" fill="#fff" fill-rule="evenodd"/></svg>
<div class="tray" style="left:1683px;top:1028px;transform:scaleX(.93);transform-origin:0 0">ENG</div>
<div class="tray" style="left:1689px;top:1055px">US</div>
<div class="tray" style="left:1751px;top:1028px">1:54 PM</div>
<div class="tray" style="left:1736px;top:1055px;transform:scaleX(1.09);transform-origin:0 0">2018-11-23</div>
<svg style="position:absolute;left:1857px;top:1037px" width="40" height="40" viewBox="0 0 40 40"><path d="M1 1H25V20H9L6 23.5V20H1Z" fill="#fff"/><path d="M5.5 6.8H19.5M5.5 10.6H19.5M5.5 14.7H19.5" stroke="#101a22" stroke-width="1"/><circle cx="24" cy="24.5" r="13.2" fill="rgba(60,60,60,.57)" stroke="#7d8184" stroke-width="1"/></svg>
<div style="position:absolute;left:1869px;top:1052px;width:24px;text-align:center;font-weight:bold;font-size:18px;line-height:20px;color:#fff">12</div>
<div class="r" style="left:1912px;top:1020px;width:1px;height:60px;background:#5a6570"></div>
</body></html>
